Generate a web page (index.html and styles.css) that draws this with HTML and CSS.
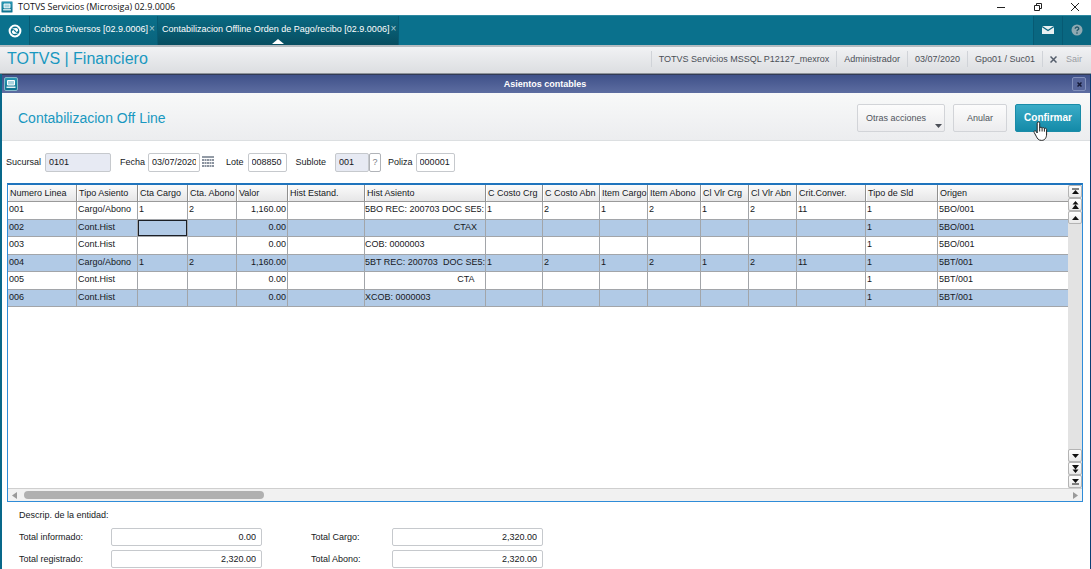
FILE: index.html
```html
<!DOCTYPE html>
<html lang="es">
<head>
<meta charset="utf-8">
<meta name="viewport" content="width=device-width, initial-scale=1">
<title>TOTVS Servicios (Microsiga) 02.9.0006</title>
<link rel="stylesheet" href="styles.css">
</head>
<body>
<svg class="defs" width="0" height="0" aria-hidden="true">
  <defs>
    <linearGradient id="teal" x1="0" y1="0" x2="0" y2="1"><stop offset="0" stop-color="#2b9ab6"/><stop offset="1" stop-color="#0b6f8c"/></linearGradient>
    <symbol id="app" viewBox="0 0 14 14">
      <rect x=".5" y=".5" width="13" height="13" rx="1.5" fill="url(#teal)" stroke="#86b9c9"/>
      <path d="M3.500 3.500h7v4.500h-7z" fill="#a9d3de" stroke="#fff" stroke-width="1"/>
      <path d="M2.500 9.500h9v1.500h-9z" fill="#e6f1f4"/>
    </symbol>
  </defs>
</svg>

<header class="titlebar">
  <svg class="app-icon" width="12" height="12"><use href="#app"/></svg>
  <span class="titlebar-text">TOTVS Servicios (Microsiga) 02.9.0006</span>
  <div class="window-controls">
    <button type="button" aria-label="Minimizar"><svg width="10" height="10" viewBox="0 0 10 10"><path d="M1 5.5h8" stroke="#222" fill="none"/></svg></button>
    <button type="button" aria-label="Restaurar"><svg width="10" height="10" viewBox="0 0 10 10"><path d="M1.500 3.500h5v5h-5zM3.500 3.500v-2h5v5h-2" stroke="#222" fill="none"/></svg></button>
    <button type="button" aria-label="Cerrar"><svg width="10" height="10" viewBox="0 0 10 10"><path d="M1 1l8 8M9 1l-8 8" stroke="#222" fill="none"/></svg></button>
  </div>
</header>

<nav class="tabs">
  <button type="button" class="home" aria-label="Inicio">
    <svg width="14" height="14" viewBox="0 0 14 14"><circle cx="7" cy="7" r="5.400" fill="none" stroke="#fff" stroke-width="2"/><path d="M4 4.500l4-.5c1.500 0 2.500 1.500 2 3L8.500 8 7 6z" fill="#fff"/><path d="M10 9.500l-4 .5c-1.500 0-2.500-1.500-2-3L5.500 6 7 8z" fill="#fff"/></svg>
  </button>
  <div class="tab"><a href="#">Cobros Diversos [02.9.0006]</a><button type="button" class="tab-close" aria-label="Cerrar pestaña">×</button></div>
  <div class="tab tab-active"><a href="#">Contabilizacion Offline Orden de Pago/recibo [02.9.0006]</a><button type="button" class="tab-close" aria-label="Cerrar pestaña">×</button></div>
  <div class="tab-tools">
    <button type="button" aria-label="Mensajes"><svg width="12" height="10" viewBox="0 0 12 10"><path d="M0 1h12v8H0z" fill="#e8f0f2"/><path d="M0 1.500l6 4 6-4" fill="none" stroke="#0b6681" stroke-width="1.200"/></svg></button>
    <button type="button" aria-label="Ayuda"><svg width="12" height="12" viewBox="0 0 12 12"><circle cx="6" cy="6" r="5.500" fill="#8fa9b2"/><path d="M4.200 4.700C4.200 2.400 7.900 2.500 7.800 4.600 7.700 5.900 6 5.800 6 7.300M6 8.300v1.400" fill="none" stroke="#24586a" stroke-width="1.300"/></svg></button>
  </div>
</nav>

<div class="module">
  <h1>TOTVS | Financiero</h1>
  <ul class="session">
    <li>TOTVS Servicios MSSQL P12127_mexrox</li>
    <li>Administrador</li>
    <li>03/07/2020</li>
    <li>Gpo01 / Suc01</li>
    <li><button type="button" class="exit"><svg width="7" height="7" viewBox="0 0 7 7"><path d="M.5.5l6 6M6.500.5l-6 6" stroke="#555e6c" stroke-width="1.500"/></svg>Sair</button></li>
  </ul>
</div>

<main class="dialog">
  <div class="dialog-title">
    <svg class="dialog-icon" width="14" height="14"><use href="#app"/></svg>
    <h2>Asientos contables</h2>
    <button type="button" class="dialog-close" aria-label="Cerrar"><svg width="5" height="5" viewBox="0 0 5 5"><path d="M.5.5l4 4M4.500.5l-4 4" stroke="#161b38" stroke-width="1.500"/></svg></button>
  </div>

  <div class="actions">
    <h3>Contabilizacion Off Line</h3>
    <button type="button" class="btn btn-menu">Otras acciones<svg class="caret" width="7" height="4" viewBox="0 0 7 4"><path d="M0 0h7L3.500 4z" fill="#4c5058"/></svg></button>
    <button type="button" class="btn btn-cancel">Anular</button>
    <button type="button" class="btn btn-primary">Confirmar
      <svg class="cursor" width="16" height="20" viewBox="0 0 16 20"><path d="M4.200 12V2.200c0-1.600 2.500-1.600 2.500 0V7c.3-1.200 2.300-1.100 2.400.3.400-1.100 2.200-.9 2.300.4.500-.9 2.200-.6 2.200.8V13c0 3.500-1.600 6.400-5 6.400-3.200 0-4.200-1.800-5.400-4.200L1.100 11.300c-.6-1.300 1.200-2.100 2-.9z" fill="#fff" stroke="#222" stroke-width="1"/><path d="M6.700 7v3.500M9.100 7.300v3.200M11.400 7.700v3" stroke="#222" fill="none"/></svg>
    </button>
  </div>

  <form class="fields">
    <label for="sucursal">Sucursal</label><input id="sucursal" class="w-sucursal readonly" value="0101" readonly>
    <label for="fecha">Fecha</label><input id="fecha" class="w-fecha" value="03/07/2020">
    <button type="button" class="calendar" aria-label="Calendario"><svg width="12" height="12" viewBox="0 0 12 12"><path d="M0 0h12v2H0z" fill="#939ba6"/><path d="M0 4h12M0 7h12M0 10h12" stroke="#8a929e" stroke-width="2" stroke-dasharray="2 .5"/></svg></button>
    <label for="lote">Lote</label><input id="lote" class="w-lote" value="008850">
    <label for="sublote">Sublote</label><input id="sublote" class="w-sublote readonly" value="001" readonly><button type="button" class="lookup">?</button>
    <label for="poliza">Poliza</label><input id="poliza" class="w-poliza" value="000001">
  </form>

  <section class="grid">
    <div class="grid-body">
      <table>
        <colgroup><col class="c69"><col class="c61"><col class="c50"><col class="c49"><col class="c51"><col class="c77"><col class="c121"><col class="c57"><col class="c57"><col class="c48"><col class="c53"><col class="c48"><col class="c48"><col class="c69"><col class="c72"><col></colgroup>
        <thead><tr><th>Numero Linea</th><th>Tipo Asiento</th><th>Cta Cargo</th><th>Cta. Abono</th><th>Valor</th><th>Hist Estand.</th><th>Hist Asiento</th><th>C Costo Crg</th><th>C Costo Abn</th><th>Item Cargo</th><th>Item Abono</th><th>Cl Vlr Crg</th><th>Cl Vlr Abn</th><th>Crit.Conver.</th><th>Tipo de Sld</th><th>Origen</th></tr></thead>
        <tbody>
          <tr><td>001</td><td>Cargo/Abono</td><td>1</td><td>2</td><td class="num">1,160.00</td><td></td><td class="hist">5BO REC: 200703 DOC SE5:</td><td>1</td><td>2</td><td>1</td><td>2</td><td>1</td><td>2</td><td>11</td><td>1</td><td>5BO/001</td></tr>
          <tr><td>002</td><td>Cont.Hist</td><td class="selected"></td><td></td><td class="num">0.00</td><td></td><td class="hist-end">CTAX</td><td></td><td></td><td></td><td></td><td></td><td></td><td></td><td>1</td><td>5BO/001</td></tr>
          <tr><td>003</td><td>Cont.Hist</td><td></td><td></td><td class="num">0.00</td><td></td><td class="hist">COB: 0000003</td><td></td><td></td><td></td><td></td><td></td><td></td><td></td><td>1</td><td>5BO/001</td></tr>
          <tr><td>004</td><td>Cargo/Abono</td><td>1</td><td>2</td><td class="num">1,160.00</td><td></td><td class="hist">5BT REC: 200703&nbsp; DOC SE5:</td><td>1</td><td>2</td><td>1</td><td>2</td><td>1</td><td>2</td><td>11</td><td>1</td><td>5BT/001</td></tr>
          <tr><td>005</td><td>Cont.Hist</td><td></td><td></td><td class="num">0.00</td><td></td><td class="hist-end">CTA&nbsp;</td><td></td><td></td><td></td><td></td><td></td><td></td><td></td><td>1</td><td>5BT/001</td></tr>
          <tr><td>006</td><td>Cont.Hist</td><td></td><td></td><td class="num">0.00</td><td></td><td class="hist">XCOB: 0000003</td><td></td><td></td><td></td><td></td><td></td><td></td><td></td><td>1</td><td>5BT/001</td></tr>
        </tbody>
      </table>
    </div>
    <div class="vbar">
      <button type="button" aria-label="Primero"><svg width="7" height="7" viewBox="0 0 7 7"><path d="M0 1h7" stroke="#111"/><path d="M3.500 2L7 6H0z" fill="#111"/></svg></button>
      <button type="button" aria-label="Página anterior"><svg width="7" height="8" viewBox="0 0 7 8"><path d="M3.500 0L6.500 3.500h-6zM3.500 3.500L7 8H0z" fill="#111"/></svg></button>
      <button type="button" aria-label="Anterior"><svg width="7" height="4" viewBox="0 0 7 4"><path d="M3.500 0L7 4H0z" fill="#111"/></svg></button>
      <span class="vtrack"></span>
      <button type="button" aria-label="Siguiente"><svg width="7" height="4" viewBox="0 0 7 4"><path d="M0 0h7L3.500 4z" fill="#111"/></svg></button>
      <button type="button" aria-label="Página siguiente"><svg width="7" height="8" viewBox="0 0 7 8"><path d="M0 0h7L3.500 4.500zM.5 4.500h6L3.500 8z" fill="#111"/></svg></button>
      <button type="button" aria-label="Último"><svg width="7" height="7" viewBox="0 0 7 7"><path d="M0 1h7L3.500 5z" fill="#111"/><path d="M0 6h7" stroke="#111"/></svg></button>
    </div>
    <div class="hbar">
      <svg width="5" height="7" viewBox="0 0 5 7"><path d="M5 0v7L0 3.500z" fill="#9a9a9a"/></svg>
      <div class="htrack"><div class="hthumb"></div></div>
      <svg width="5" height="7" viewBox="0 0 5 7"><path d="M0 0v7l5-3.500z" fill="#9a9a9a"/></svg>
    </div>
  </section>

  <footer class="totals">
    <p>Descrip. de la entidad:</p>
    <label for="t1">Total informado:</label><input id="t1" value="0.00" readonly>
    <label for="t2">Total Cargo:</label><input id="t2" value="2,320.00" readonly>
    <label for="t3">Total registrado:</label><input id="t3" value="2,320.00" readonly>
    <label for="t4">Total Abono:</label><input id="t4" value="2,320.00" readonly>
  </footer>
</main>
</body>
</html>
```
FILE: styles.css
```css
* { box-sizing: border-box; }

body {
  margin: 0;
  height: 100vh;
  display: flex;
  flex-direction: column;
  overflow: hidden;
  background: #fff;
  color: #16181c;
  font: 9px/12px "Liberation Sans", Arial, sans-serif;
}

h1, h2, h3, p, ul { margin: 0; padding: 0; font-weight: normal; }
button, input { font: inherit; color: inherit; margin: 0; }
button { padding: 0; border: 0; background: none; display: flex; align-items: center; justify-content: center; }
a { color: inherit; text-decoration: none; }
svg { display: block; flex: none; }
.defs { position: absolute; }

/* Window title */
.titlebar { display: flex; align-items: center; flex: none; height: 15px; padding: 0 0 2px 1px; color: #111; }
.titlebar-text { margin-left: 5px; font: 9px/12px "Open Sans", sans-serif; white-space: nowrap; }
.window-controls { display: flex; margin-left: auto; gap: 27px; padding-right: 11px; height: 10px; }

/* Tabs */
.tabs { display: flex; flex: none; height: 30px; background: #0a718d; color: #fff; border-top: 1px solid #2d88a0; }
.home { width: 30px; border-right: 1px solid #075a73; }
.tab { display: flex; align-items: center; padding: 0 2px 3px 4px; gap: 1px; border-right: 1px solid #075a73; background: linear-gradient(#0b708b, #09637c); white-space: nowrap; }
.tab-active { position: relative; background: linear-gradient(#0a6a83, #074d60); }
.tab-active::after { content: ""; position: absolute; left: 50%; bottom: 1px; margin-left: -6px; border: 6px solid transparent; border-top: 0; border-bottom: 5px solid #fff; }
.tab-close { color: #a9cbd5; font-size: 10px; }
.tab-tools { display: flex; margin-left: auto; }
.tab-tools button { width: 29px; padding-bottom: 2px; border-left: 1px solid #075a73; background: #096781; }

/* Module header */
.module { display: flex; align-items: center; flex: none; height: 29px; padding: 0 2px 2px 7px; border-top: 2px solid #b5bbc0; border-bottom: 1px solid #8d9298; background: linear-gradient(#f1f2f4, #dcdee1); }
.module h1 { flex: 1; color: #1998c0; font-size: 16px; line-height: 20px; white-space: nowrap; }
.session { display: flex; list-style: none; color: #4b4f57; white-space: nowrap; }
.session li { padding: 2px 7px; border-left: 1px solid #d0d3d8; }
.exit { gap: 9px; color: #9a9da4; }

/* Dialog */
.dialog { display: flex; flex-direction: column; flex: 1; min-height: 0; border-left: 2px solid #08688a; border-right: 1px solid #0b3f74; }
.dialog-title { display: flex; align-items: center; flex: none; height: 19px; padding: 0 4px 0 2px; background: linear-gradient(#3f5189, #5d6da1); border-top: 1px solid #323b55; color: #fff; }
.dialog-title h2 { flex: 1; text-align: center; font-size: 9px; line-height: 12px; font-weight: bold; }
.dialog-close { width: 14px; height: 14px; border: 1px solid #8290bb; border-radius: 2px; background: #56659a; }

.actions { display: flex; align-items: center; flex: none; height: 48px; padding: 2px 9px 0 16px; gap: 8px; background: linear-gradient(#f8f9f9, #ecedef); border-bottom: 1px solid #dcdfe1; }
.actions h3 { flex: 1; color: #1998c0; font-size: 14px; line-height: 18px; }
.btn { position: relative; height: 28px; border: 1px solid #d2d4d8; border-radius: 2px; background: linear-gradient(#fcfcfc, #ececee); color: #50545c; }
.btn-menu { width: 88px; padding-right: 10px; }
.caret { position: absolute; right: 2px; bottom: 3px; }
.btn-cancel { width: 54px; }
.btn-primary { width: 66px; border-color: #1a8ca8; background: linear-gradient(#3bacc7, #148aa8); color: #fff; font-size: 10px; font-weight: bold; }
.cursor { position: absolute; left: 17px; top: 16px; }

/* Key fields */
.fields { display: flex; align-items: center; flex: none; height: 42px; padding-left: 4px; white-space: nowrap; }
input { height: 18px; padding: 0 3px; border: 1px solid #c6c9cd; border-radius: 2px; background: #fff; outline: 0; }
.fields input { height: 19px; margin: 0 9px 0 4px; }
.fields .readonly { background: #e7eaf3; }
.fields .w-sucursal { width: 66px; }
.fields .w-fecha { width: 52px; padding: 0 3px; margin: 0 2px 0 3px; }
.fields .w-lote { width: 39px; }
.fields .w-sublote { width: 34px; margin: 0 0 0 9px; }
.fields .w-poliza { width: 39px; margin-left: 3px; }
.calendar { margin-right: 12px; }
.lookup { width: 12px; height: 19px; margin-right: 7px; border: 1px solid #b0b3b8; border-radius: 2px; color: #7a7e86; }

/* Entries grid */
.grid { display: grid; grid-template: minmax(0, 1fr) 13px / minmax(0, 1fr) 14px; flex: 1; min-height: 0; margin: 0 7px 0 5px; border: 1px solid #2f8cd8; border-top: 2px solid #1f74bd; }
.grid-body { overflow: hidden; }
table { width: 100%; table-layout: fixed; border-collapse: separate; border-spacing: 0; }
th, td { padding: 0 1px; overflow: hidden; text-align: left; font-weight: normal; white-space: nowrap; }
th { height: 17px; padding: 0 0 0 2px; line-height: 16px; border-right: 1px solid #8f8f8f; border-bottom: 1px solid #9a9a9a; box-shadow: inset 1px 0 #fff; background: linear-gradient(#fbfbfb, #e6e6e7); }
td { height: 18px; line-height: 15px; vertical-align: top; border-right: 1px solid #a2a5a9; border-bottom: 1px solid #a2a5a9; }
tr:nth-child(even) td { height: 17px; }
td:last-child, th:last-child { border-right: 0; }
tbody tr:nth-child(even) td { background: #b1cae6; }
.num { text-align: right; }
.hist { padding: 0; }
.hist-end { padding-right: 8px; text-align: right; }
td.selected { box-shadow: inset 0 0 0 1px #1b1f26; }
.c48 { width: 48px; } .c49 { width: 49px; } .c50 { width: 50px; } .c51 { width: 51px; }
.c53 { width: 53px; } .c57 { width: 57px; } .c61 { width: 61px; } .c69 { width: 69px; }
.c72 { width: 72px; } .c77 { width: 77px; } .c121 { width: 121px; }

.vbar { display: flex; flex-direction: column; background: #e3e3e3; }
.vbar button { height: 13px; border: 1px solid #b4b4b4; border-radius: 2px; background: linear-gradient(#fff, #e9e9e9); }
.vtrack { flex: 1; }
.hbar { grid-column: 1 / -1; display: flex; align-items: center; gap: 7px; padding: 0 4px; border-top: 1px solid #cfcfcf; background: #f1f1f1; }
.htrack { flex: 1; }
.hthumb { width: 23%; height: 8px; border-radius: 4px; background: #b0b0b0; }

/* Totals */
.totals { display: grid; grid-template-columns: 92px 151px 130px 151px; row-gap: 4px; align-items: center; flex: none; padding: 7px 0 1px 17px; white-space: nowrap; }
.totals p { grid-column: 1 / -1; margin-bottom: 3px; }
.totals label:nth-of-type(even) { padding-left: 49px; }
.totals input { width: 100%; padding: 0 5px; text-align: right; }
```
